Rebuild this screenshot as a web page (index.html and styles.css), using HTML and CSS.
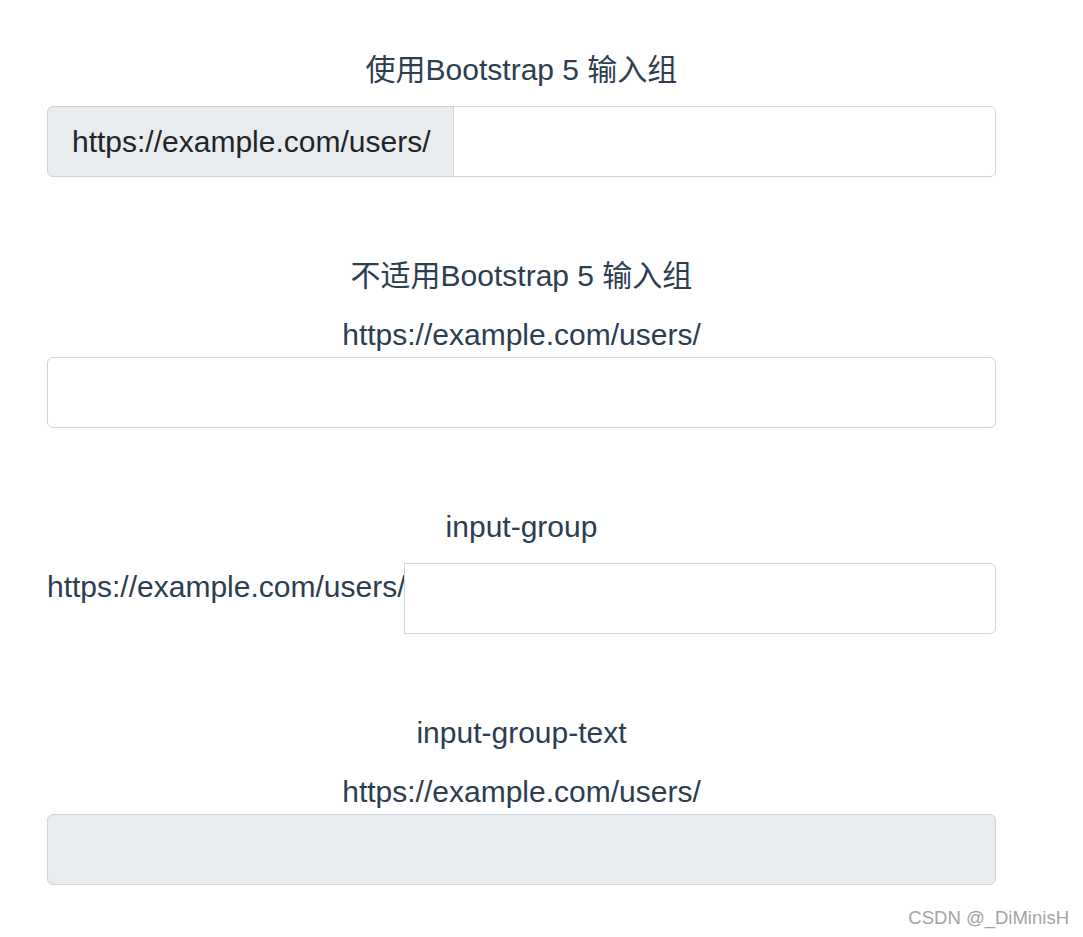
FILE: index.html
```html
<!DOCTYPE html>
<html lang="zh">
<head>
<meta charset="utf-8">
<title>Bootstrap 5 输入组</title>
<link rel="stylesheet" href="styles.css">
</head>
<body>
<div class="page">
  <section class="section">
    <h3 class="title">使用Bootstrap 5 输入组</h3>
    <div class="group">
      <span class="group-text">https://example.com/users/</span>
      <input class="group-input" type="text">
    </div>
  </section>

  <section class="section">
    <h3 class="title">不适用Bootstrap 5 输入组</h3>
    <label class="label">https://example.com/users/</label>
    <input class="field" type="text">
  </section>

  <section class="section">
    <h3 class="title">input-group</h3>
    <div class="row">
      <span class="row-text">https://example.com/users/</span>
      <input class="row-input" type="text">
    </div>
  </section>

  <section class="section">
    <h3 class="title">input-group-text</h3>
    <label class="label">https://example.com/users/</label>
    <div class="gray-box"></div>
  </section>
</div>
<div class="watermark">CSDN @_DiMinisH</div>
</body>
</html>
```

FILE: styles.css
```css
html, body {
  margin: 0;
  padding: 0;
  background: #ffffff;
}

body {
  font-family: "Liberation Sans", Arial, "Noto Sans CJK SC", sans-serif;
  font-size: 30px;
  line-height: 45px;
  color: #2c3e50;
  height: 937px;
  position: relative;
  overflow: hidden;
}

.page {
  width: 949px;
  margin-left: 47px;
  padding-top: 47px;
}

.section {
  display: flex;
  flex-direction: column;
  margin-bottom: 76px;
}

.title {
  margin: 0 0 14px;
  font-size: 30px;
  font-weight: 400;
  line-height: 45px;
  text-align: center;
}

.label {
  display: block;
  text-align: center;
  line-height: 45px;
}

.group {
  display: flex;
  height: 71px;
}

.group-text {
  display: flex;
  align-items: center;
  padding: 0 23px 0 24px;
  background: #e9ecef;
  border: 1px solid #ced4da;
  border-radius: 6px 0 0 6px;
  color: #212529;
  white-space: nowrap;
}

.group-input {
  flex: 1;
  min-width: 0;
  margin: 0;
  margin-left: -1px;
  border: 1px solid #ced4da;
  border-radius: 0 6px 6px 0;
  font: inherit;
  background: #fff;
  box-sizing: border-box;
  outline: none;
}

.field {
  display: block;
  width: 100%;
  height: 71px;
  margin: 0;
  box-sizing: border-box;
  border: 1px solid #ced4da;
  border-radius: 6px;
  background: #fff;
  font: inherit;
  outline: none;
}

.row {
  display: flex;
  align-items: flex-start;
}

.row-text {
  white-space: nowrap;
  line-height: 45px;
  margin-top: 1px;
}

.row-input {
  flex: 1;
  min-width: 0;
  height: 71px;
  margin: 0 0 0 -1px;
  box-sizing: border-box;
  border: 1px solid #ced4da;
  border-radius: 0 6px 6px 0;
  background: #fff;
  font: inherit;
  outline: none;
}

.gray-box {
  height: 71px;
  box-sizing: border-box;
  border: 1px solid #ced4da;
  border-radius: 6px;
  background: #e9ecef;
}

.watermark {
  position: absolute;
  right: 14px;
  bottom: 8px;
  font-size: 18.5px;
  line-height: 22px;
  color: #a3a3a3;
}
```
